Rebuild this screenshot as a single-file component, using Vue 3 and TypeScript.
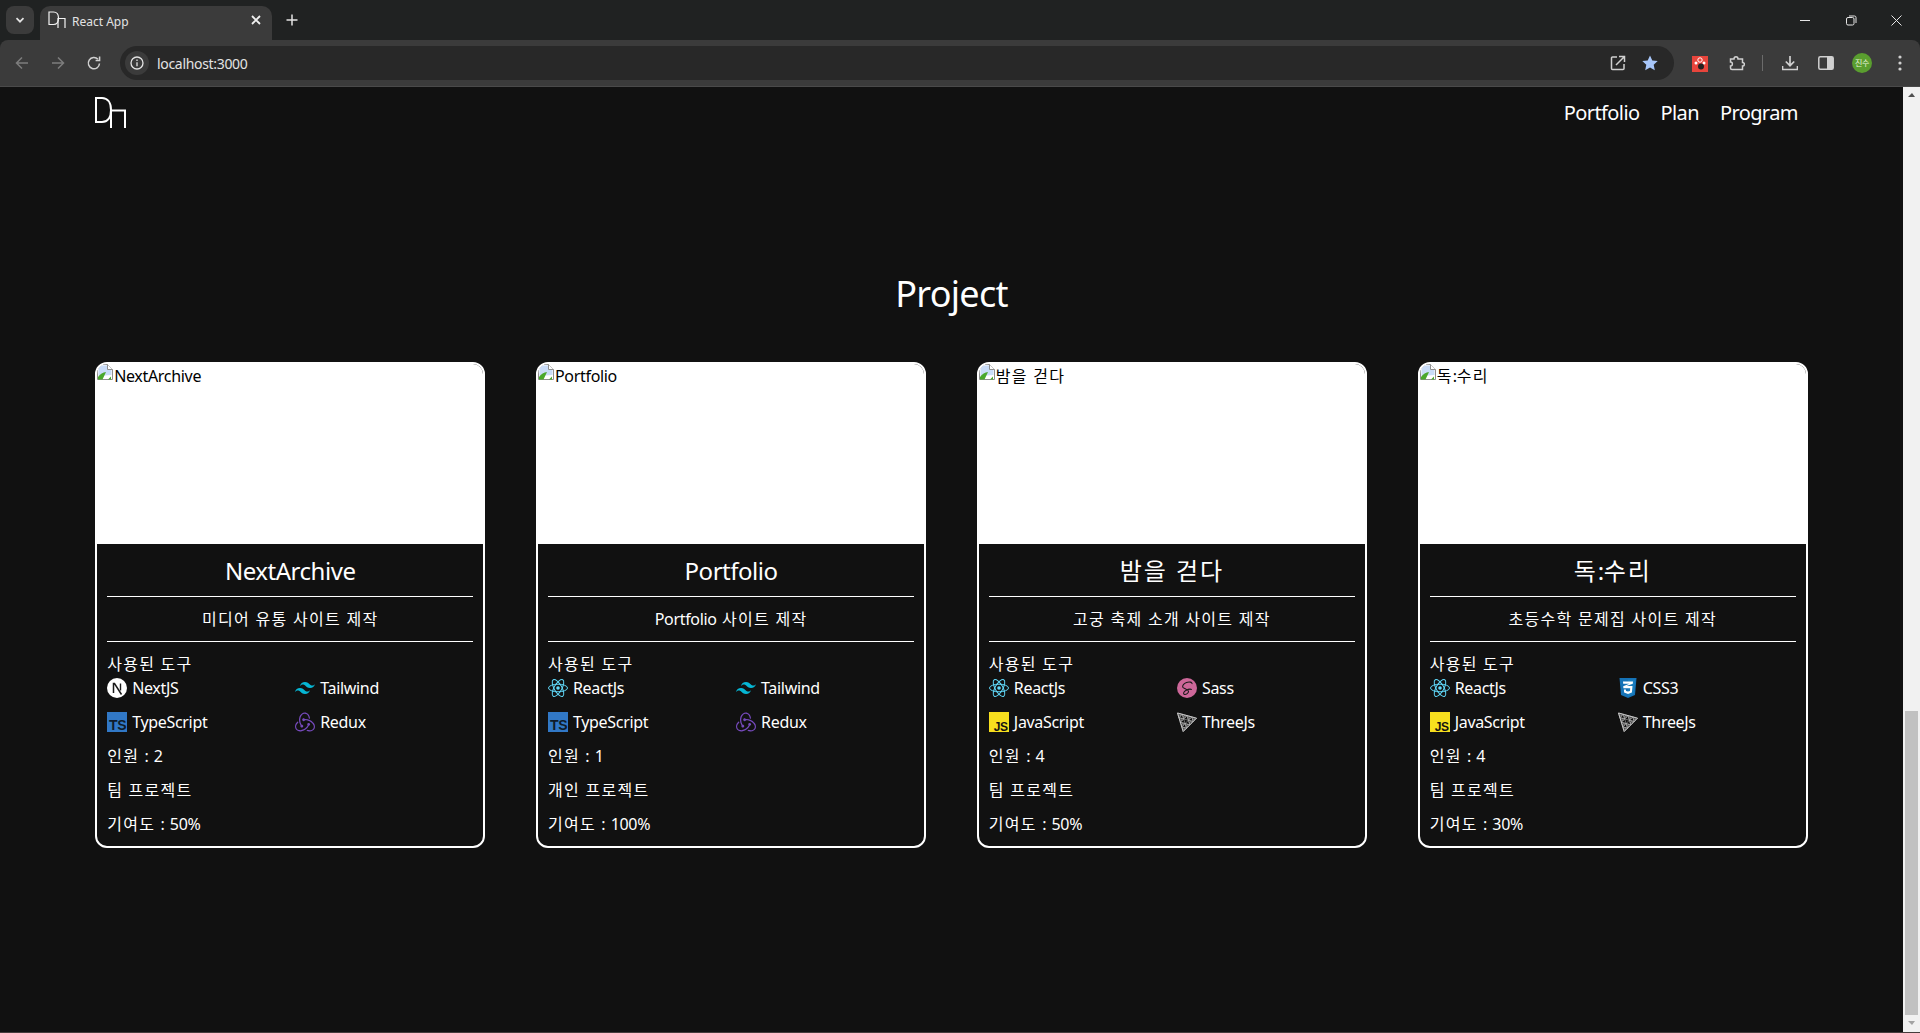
<script setup lang="ts">
import { h } from 'vue'

interface Tool {
  name: string
  icon: string
}

interface Project {
  title: string
  desc: string
  tools: Tool[]
  people: number
  kind: string
  share: number
}

const navLinks = ['Portfolio', 'Plan', 'Program']

const react: Tool = { name: 'ReactJs', icon: 'react' }
const tailwind: Tool = { name: 'Tailwind', icon: 'tailwind' }
const ts: Tool = { name: 'TypeScript', icon: 'ts' }
const redux: Tool = { name: 'Redux', icon: 'redux' }
const js: Tool = { name: 'JavaScript', icon: 'js' }
const three: Tool = { name: 'ThreeJs', icon: 'three' }

const projects: Project[] = [
  {
    title: 'NextArchive',
    desc: '미디어 유통 사이트 제작',
    tools: [{ name: 'NextJS', icon: 'next' }, tailwind, ts, redux],
    people: 2,
    kind: '팀 프로젝트',
    share: 50
  },
  {
    title: 'Portfolio',
    desc: 'Portfolio 사이트 제작',
    tools: [react, tailwind, ts, redux],
    people: 1,
    kind: '개인 프로젝트',
    share: 100
  },
  {
    title: '밤을 걷다',
    desc: '고궁 축제 소개 사이트 제작',
    tools: [react, { name: 'Sass', icon: 'sass' }, js, three],
    people: 4,
    kind: '팀 프로젝트',
    share: 50
  },
  {
    title: '독:수리',
    desc: '초등수학 문제집 사이트 제작',
    tools: [react, { name: 'CSS3', icon: 'css' }, js, three],
    people: 4,
    kind: '팀 프로젝트',
    share: 30
  }
]

// hangul runs get their own span, the CJK font is narrower than the original one
const Txt = (props: { text: string }) =>
  h(
    'span',
    props.text
      .split(/([\uAC00-\uD7A3]+(?: [\uAC00-\uD7A3]+)*)/)
      .map((part, i) => (i % 2 ? h('span', { class: 'ko' }, part) : part))
  )
Txt.props = ['text']

// triangle mesh of the three.js mark
type Pt = [number, number]
const mid = (a: Pt, b: Pt): Pt => [(a[0] + b[0]) / 2, (a[1] + b[1]) / 2]
const mesh = (a: Pt, b: Pt, c: Pt, depth: number): string => {
  const tri = `M${a[0]} ${a[1]}L${b[0]} ${b[1]}L${c[0]} ${c[1]}Z`
  if (depth === 0) return tri
  const ab = mid(a, b)
  const bc = mid(b, c)
  const ca = mid(c, a)
  return (
    mesh(a, ab, ca, depth - 1) +
    mesh(ab, b, bc, depth - 1) +
    mesh(ca, bc, c, depth - 1) +
    (depth > 1 ? mesh(ab, bc, ca, depth - 2) : '')
  )
}
const threePath = mesh([0.5, 1], [19.5, 6.2], [6.2, 19.5], 3)
</script>

<template>
  <div class="screen">
    <header class="browser">
      <div class="tabstrip">
        <button class="tab-search">
          <svg width="12" height="12" viewBox="0 0 12 12"><path d="M2.5 4.2 6 7.7l3.5-3.5" fill="none" stroke="#e3e3e3" stroke-width="1.7" /></svg>
        </button>
        <div class="tab">
          <svg class="favicon" width="18" height="18" viewBox="0 0 18 18" fill="none" stroke="#f3f3f3" stroke-width="1.2">
            <path d="M1 1h4.500c3.200 0 5 2.400 5 6s-1.800 6.500-5 6.500H1z" />
            <path d="M10 17V7.500h7V17" />
          </svg>
          <span class="tab-title">React App</span>
          <svg class="tab-close" width="10" height="10" viewBox="0 0 10 10"><path d="M1 1l8 8M9 1 1 9" stroke="#f0f0f0" stroke-width="1.800" /></svg>
        </div>
        <svg class="new-tab" width="12" height="12" viewBox="0 0 12 12"><path d="M6 .5v11M.5 6h11" stroke="#e3e3e3" stroke-width="1.500" /></svg>
        <div class="window-controls">
          <svg width="11" height="11" viewBox="0 0 11 11"><path d="M0 5.500h10" stroke="#e6e6e6" /></svg>
          <svg width="11" height="11" viewBox="0 0 11 11" fill="none" stroke="#e6e6e6"><rect x=".5" y="2.500" width="7.500" height="7.500" rx="1.500" /><path d="M3 1h5.500a1.500 1.500 0 0 1 1.500 1.500V8" /></svg>
          <svg width="11" height="11" viewBox="0 0 11 11"><path d="M.5.5l10 10M10.500.5l-10 10" stroke="#e6e6e6" /></svg>
        </div>
      </div>

      <div class="toolbar">
        <svg class="nav-btn" width="16" height="16" viewBox="0 0 16 16" fill="none" stroke="#7d7d7d" stroke-width="1.500"><path d="M14 8H2.500M8 2.500 2.500 8 8 13.500" /></svg>
        <svg class="nav-btn" width="16" height="16" viewBox="0 0 16 16" fill="none" stroke="#7d7d7d" stroke-width="1.500"><path d="M2 8h11.500M8 2.500 13.500 8 8 13.500" /></svg>
        <svg class="nav-btn" width="16" height="16" viewBox="0 0 16 16" fill="none" stroke="#d0d0d0" stroke-width="1.500"><path d="M13.500 8.500A5.600 5.600 0 1 1 12 4.300" /><path d="M13.600 1.500v4h-4" /></svg>

        <div class="omnibox">
          <span class="site-chip">
            <svg width="14" height="14" viewBox="0 0 14 14" fill="none" stroke="#e3e3e3" stroke-width="1.300"><circle cx="7" cy="7" r="6" /><path d="M7 6.200v4M7 3.600v1.400" /></svg>
          </span>
          <span class="url">localhost:3000</span>
          <svg class="omni-share" width="16" height="16" viewBox="0 0 16 16" fill="none" stroke="#d0d0d0" stroke-width="1.500"><path d="M7 2H2.500a1 1 0 0 0-1 1v10.500a1 1 0 0 0 1 1H13a1 1 0 0 0 1-1V9" /><path d="M6 10 14 2M9 1.500h5.500V7" /></svg>
          <svg class="omni-star" width="16" height="16" viewBox="0 0 16 16"><path d="M8 .5l2.300 5 5.400.6-4 3.700 1.100 5.400L8 12.500l-4.800 2.700 1.100-5.400-4-3.700 5.400-.6z" fill="#a8c7fa" /></svg>
        </div>

        <div class="ext-red">
          <svg width="16" height="16" viewBox="0 0 16 16"><rect width="16" height="16" fill="#e8453c" /><circle cx="8" cy="4" r="2.200" fill="none" stroke="#fff" /><circle cx="4" cy="7" r="1.500" fill="#fff" /><circle cx="12" cy="7" r="1.500" fill="#fff" /><circle cx="9" cy="10.500" r="3" fill="#222" /></svg>
        </div>
        <svg class="ext-puzzle" width="16" height="16" viewBox="0 0 16 16" fill="none" stroke="#d0d0d0" stroke-width="1.500"><path d="M1.500 4H5c0-3 4-3 4 0h4.500v3.500c2.500 0 2.500 3.500 0 3.500v3.500H3c-1 0-1.500-.5-1.500-1.500V11c2.500 0 2.500-4 0-4z" /></svg>
        <span class="tool-sep"></span>
        <svg class="tool-download" width="16" height="16" viewBox="0 0 16 16" fill="none" stroke="#d0d0d0" stroke-width="1.700"><path d="M8 1v9.500M3.800 6.500 8 10.700l4.200-4.200M.5 11v3.500h15V11" /></svg>
        <svg class="tool-panel" width="16" height="16" viewBox="0 0 16 16"><rect x=".8" y="1.800" width="14.400" height="12.400" rx="1.500" fill="none" stroke="#d0d0d0" stroke-width="1.500" /><rect x="9" y="2" width="6" height="12" fill="#d0d0d0" /></svg>
        <span class="avatar">진수</span>
        <svg class="tool-more" width="4" height="16" viewBox="0 0 4 16" fill="#d0d0d0"><circle cx="2" cy="2" r="1.600" /><circle cx="2" cy="8" r="1.600" /><circle cx="2" cy="14" r="1.600" /></svg>
      </div>
    </header>

    <div class="viewport">
      <main class="page">
        <nav class="topnav">
          <svg class="logo" width="32" height="31" viewBox="0 0 32 31" fill="none" stroke="#fff" stroke-width="2">
            <path d="M1 1h6c5.500 0 9 4.500 9 12s-3.500 12-9 12H1z" />
            <path d="M16 31V13.500h14V31" />
          </svg>
          <ul class="links">
            <li v-for="link in navLinks" :key="link">{{ link }}</li>
          </ul>
        </nav>

        <section class="projects">
          <h2 class="heading">Project</h2>
          <div class="cards">
            <article v-for="p in projects" :key="p.title" class="card">
              <div class="thumb">
                <svg class="broken" width="16" height="16" viewBox="0 0 16 16">
                  <path d="M.5.5h10l5 5v10H.5z" fill="#fff" stroke="#8f8f8f" />
                  <path d="M1.500 1.500h8.500l4.500 4.500v5L1.500 12z" fill="#c9dcf8" />
                  <path d="M1 15.500V13c2-3 5-4.500 8-5L5.500 15.500z" fill="#4aa82c" />
                  <path d="M11 15.500l3-3v3z" fill="#4aa82c" />
                  <path d="M10.500.5v5h5" fill="#fff" stroke="#8f8f8f" />
                </svg>
                <Txt class="alt" :text="p.title" />
              </div>
              <div class="body">
                <h3 class="title"><Txt :text="p.title" /></h3>
                <p class="desc"><Txt :text="p.desc" /></p>
                <p class="used"><Txt text="사용된 도구" /></p>
                <ul class="tools">
                  <li v-for="t in p.tools" :key="t.name" class="tool">
                    <svg v-if="t.icon === 'next'" width="20" height="20" viewBox="0 0 20 20">
                      <circle cx="10" cy="10" r="10" fill="#fff" />
                      <path d="M6.500 15V5.500h1l7 11" fill="none" stroke="#1a1a1a" stroke-width="1.500" />
                      <path d="M13.500 5.500v7" stroke="#1a1a1a" stroke-width="1.400" />
                    </svg>
                    <svg v-else-if="t.icon === 'tailwind'" width="20" height="20" viewBox="0 0 24 24">
                      <path fill="#06b6d4" d="M12.001,4.800c-3.200,0-5.200,1.600-6,4.800c1.200-1.600,2.600-2.200,4.200-1.800c0.913,0.228,1.565,0.890,2.288,1.624C13.666,10.618,15.027,12,18.001,12c3.200,0,5.200-1.600,6-4.800c-1.200,1.600-2.600,2.200-4.200,1.800c-0.913-0.228-1.565-0.890-2.288-1.624C16.337,6.182,14.976,4.800,12.001,4.800z M6.001,12c-3.200,0-5.200,1.600-6,4.800c1.200-1.600,2.600-2.200,4.200-1.800c0.913,0.228,1.565,0.890,2.288,1.624c1.177,1.194,2.538,2.576,5.512,2.576c3.200,0,5.200-1.600,6-4.800c-1.200,1.600-2.600,2.200-4.200,1.800c-0.913-0.228-1.565-0.890-2.288-1.624C10.337,13.382,8.976,12,6.001,12z" />
                    </svg>
                    <svg v-else-if="t.icon === 'ts'" class="badge" width="20" height="20" viewBox="0 0 20 20">
                      <rect width="20" height="20" fill="#3178c6" />
                      <text x="19" y="18.300" text-anchor="end" font-size="14" font-weight="700" fill="#0f1c2b" class="badge-text">TS</text>
                    </svg>
                    <svg v-else-if="t.icon === 'redux'" width="20" height="20" viewBox="0 0 24 24">
                      <path fill="#764abc" d="M16.634 16.504c.87-.075 1.543-.84 1.5-1.754-.047-.914-.796-1.648-1.709-1.648h-.061a1.710 1.710 0 00-1.648 1.769c.030.479.226.869.494 1.153-1.048 2.038-2.621 3.536-5.004 4.795-1.603.838-3.296 1.154-4.944.930-1.378-.195-2.456-.810-3.116-1.799-.988-1.499-1.078-3.116-.255-4.734.600-1.170 1.499-2.023 2.099-2.443a9.960 9.960 0 01-.420-1.543C-.868 14.408-.416 18.752.932 20.805c1.004 1.498 3.057 2.456 5.304 2.456.600 0 1.230-.044 1.843-.194 3.897-.749 6.848-3.086 8.541-6.532zm5.348-3.746c-2.320-2.728-5.738-4.226-9.634-4.226h-.510c-.253-.554-.837-.899-1.498-.899h-.045c-.943 0-1.678.810-1.647 1.753.030.898.794 1.648 1.708 1.648h.060a1.690 1.690 0 001.499-1.049h.540c2.310 0 4.500.674 6.488 1.992 1.527 1.005 2.622 2.323 3.237 3.897.538 1.288.509 2.547-.045 3.597-.855 1.647-2.294 2.517-4.196 2.517-1.199 0-2.367-.375-2.967-.644-.360.298-.960.793-1.394 1.093 1.318.598 2.652.943 3.940.943 2.922 0 5.093-1.647 5.918-3.236.898-1.798.824-4.824-1.469-7.416zM6.490 17.042c.030.899.793 1.648 1.708 1.648h.060a1.688 1.688 0 001.648-1.768c0-.900-.779-1.647-1.693-1.647h-.060c-.060 0-.150 0-.226.029-1.243-2.098-1.768-4.347-1.572-6.772.120-1.828.720-3.417 1.797-4.735.900-1.124 2.593-1.680 3.747-1.708 3.236-.061 4.585 3.971 4.689 5.574l1.498.450C17.741 3.197 14.686.620 11.764.620 9.020.620 6.490 2.613 5.470 5.535 4.077 9.430 4.991 13.177 6.700 16.174c-.150.195-.240.539-.210.868z" />
                    </svg>
                    <svg v-else-if="t.icon === 'react'" width="20" height="20" viewBox="0 0 20 20" fill="none" stroke="#61dafb" stroke-width="1">
                      <circle cx="10" cy="10" r="1.800" fill="#61dafb" stroke="none" />
                      <ellipse cx="10" cy="10" rx="9.500" ry="3.800" />
                      <ellipse cx="10" cy="10" rx="9.500" ry="3.800" transform="rotate(60 10 10)" />
                      <ellipse cx="10" cy="10" rx="9.500" ry="3.800" transform="rotate(120 10 10)" />
                    </svg>
                    <svg v-else-if="t.icon === 'sass'" width="20" height="20" viewBox="0 0 20 20">
                      <circle cx="10" cy="10" r="10" fill="#cd6799" />
                      <path d="M15 6c.5-2-3-2.500-5.500-1.500C7 5.500 5 7.500 5.800 9.200c.7 1.400 5.200 2 5.700 4 .4 1.800-2.500 3.700-4.200 3.200-1.400-.5-.6-3 1.500-4 2-1 4.700-1.600 6-.8" fill="none" stroke="#1a1a1a" stroke-width="1.100" />
                    </svg>
                    <svg v-else-if="t.icon === 'js'" class="badge" width="20" height="20" viewBox="0 0 20 20">
                      <rect width="20" height="20" fill="#f7df1e" />
                      <text x="18.500" y="19" text-anchor="end" font-size="12" font-weight="700" fill="#111" class="badge-text">JS</text>
                    </svg>
                    <svg v-else-if="t.icon === 'css'" width="20" height="20" viewBox="0 0 20 20">
                      <path d="M1.500 0h17L17 17l-7 3-7-3z" fill="#1572b6" />
                      <path d="M10 1.500h7l-1.200 14.500L10 18.200z" fill="#33a9dc" opacity=".2" />
                      <path d="M5 3.500h10l-.2 2.200-6.300 2.300h6l-.6 6.500L10 16l-3.900-1.500-.2-3h2l.1 1.400 2 .7 2-.7.200-2.600H5.400l-.2-2 6.200-2.500H5.200z" fill="#fff" />
                    </svg>
                    <svg v-else width="20" height="20" viewBox="0 0 20 20" fill="none" stroke="#b5b5b5" stroke-width=".55">
                      <path :d="threePath" />
                      <path d="M.5 1 19.500 6.200 6.200 19.500z" stroke="#d0d0d0" stroke-width=".9" />
                    </svg>
                    <span>{{ t.name }}</span>
                  </li>
                </ul>
                <p class="line"><Txt :text="`인원 : ${p.people}`" /></p>
                <p class="line"><Txt :text="p.kind" /></p>
                <p class="line"><Txt :text="`기여도 : ${p.share}%`" /></p>
              </div>
            </article>
          </div>
        </section>
      </main>

      <aside class="scrollbar">
        <span class="arrow-up"></span>
        <div class="track"><div class="thumb-bar"></div></div>
        <span class="arrow-down"></span>
      </aside>
    </div>
  </div>
</template>

<style scoped>
.screen {
  width: 1920px;
  height: 1033px;
  display: flex;
  flex-direction: column;
  overflow: hidden;
  font-family: "Noto Sans", "Noto Sans CJK KR", sans-serif;
  font-size: 16px;
  letter-spacing: -0.02em;
  color: #fff;
  background: #111;
}

/* browser chrome */
.browser {
  flex: none;
  background: #202222;
}

.tabstrip {
  height: 40px;
  display: flex;
  align-items: flex-start;
}

.tab-search {
  width: 28px;
  height: 28px;
  margin: 6px 0 0 6px;
  padding: 0;
  border: 0;
  border-radius: 8px;
  background: #3b3b3b;
  display: flex;
  align-items: center;
  justify-content: center;
}

.tab {
  width: 232px;
  height: 34px;
  margin: 6px 0 0 6px;
  padding: 0 0 6px 8px;
  box-sizing: border-box;
  border-radius: 10px 10px 0 0;
  background: #3b3b3b;
  display: flex;
  align-items: center;
}

.favicon {
  margin-right: 6px;
}

.tab-title {
  margin-top: 3px;
  font-size: 12px;
  letter-spacing: 0;
  color: #e3e3e3;
  flex: 1;
}

.tab-close {
  margin-right: 11px;
}

.new-tab {
  margin: 14px 0 0 14px;
}

.window-controls {
  margin-left: auto;
  width: 120px;
  height: 40px;
  box-sizing: border-box;
  display: flex;
  align-items: center;
  justify-content: space-between;
  padding: 0 18px 0 0;
}

.toolbar {
  height: 46px;
  border-bottom: 1px solid #4a4a4a;
  border-radius: 8px 8px 0 0;
  background: #3b3b3b;
  display: flex;
  align-items: center;
}

.nav-btn {
  margin-left: 20px;
  flex: none;
}

.nav-btn:first-child {
  margin-left: 14px;
}

.omnibox {
  width: 1554px;
  height: 34px;
  margin-left: 18px;
  border-radius: 17px;
  background: #282828;
  display: flex;
  align-items: center;
}

.site-chip {
  width: 24px;
  height: 24px;
  margin-left: 5px;
  border-radius: 50%;
  background: #3b3b3b;
  display: flex;
  align-items: center;
  justify-content: center;
}

.url {
  margin-left: 8px;
  font-size: 14px;
  color: #e3e3e3;
}

.omni-share {
  margin-left: auto;
}

.omni-star {
  margin: 0 16px;
}

.ext-red {
  margin-left: 18px;
  width: 16px;
  height: 16px;
}

.ext-puzzle {
  margin-left: 21px;
}

.tool-sep {
  width: 1px;
  height: 16px;
  margin-left: 17px;
  background: #6b6b6b;
}

.tool-download {
  margin-left: 19px;
}

.tool-panel {
  margin-left: 20px;
}

.avatar {
  width: 20px;
  height: 20px;
  margin-left: 18px;
  border-radius: 50%;
  background: #5a9e2f;
  font-size: 8px;
  line-height: 20px;
  text-align: center;
  color: #e8f4dc;
  flex: none;
}

.tool-more {
  margin-left: 26px;
}

/* page */
.viewport {
  flex: 1;
  min-height: 0;
  display: flex;
  border-bottom: 1px solid #453c3c;
}

.page {
  flex: 1;
  min-width: 0;
  background: #111;
  padding: 0 95.15px;
}

.topnav {
  height: 52px;
  display: flex;
  align-items: flex-start;
  justify-content: space-between;
}

.logo {
  margin-top: 10px;
  overflow: visible;
}

.links {
  list-style: none;
  margin: 0;
  padding: 12px 10px 0 0;
  display: flex;
  gap: 21px;
  font-size: 20px;
  line-height: 28px;
  letter-spacing: -0.03em;
}

.projects {
  padding-top: 131px;
}

.heading {
  margin: 0 0 44px;
  font-size: 36px;
  font-weight: 400;
  line-height: 48px;
  letter-spacing: -0.02em;
  text-align: center;
}

.cards {
  display: flex;
  justify-content: space-between;
}

.card {
  width: 390.2px;
  height: 486px;
  box-sizing: border-box;
  border: 2px solid #fff;
  border-radius: 12px;
  overflow: hidden;
}

.thumb {
  height: 180px;
  background: #fff;
  color: #000;
  display: flex;
  align-items: flex-start;
  line-height: 22px;
}

.alt {
  margin: 1px 0 0 1px;
}

.body {
  padding: 0 10px;
}

.title {
  margin: 0;
  height: 51px;
  padding-top: 1px;
  border-bottom: 1px solid #fff;
  font-size: 24px;
  font-weight: 400;
  line-height: 51px;
  letter-spacing: -0.02em;
  text-align: center;
}

.desc {
  margin: 0;
  height: 44px;
  border-bottom: 1px solid #fff;
  line-height: 44px;
  word-spacing: 1.5px;
  text-align: center;
}

.used {
  margin: 12px 0 3px;
  line-height: 21px;
}

.tools {
  list-style: none;
  margin: 0;
  padding: 0;
  display: grid;
  grid-template-columns: 1fr 1fr;
  column-gap: 10px;
  row-gap: 14px;
}

.tool {
  display: flex;
  align-items: center;
  gap: 5px;
  height: 20px;
  line-height: 20px;
}

.line {
  margin: 14px 0 0;
  line-height: 20px;
  word-spacing: 1.5px;
}

.badge {
  overflow: visible;
}

.badge-text {
  font-family: "Liberation Sans", sans-serif;
  letter-spacing: -0.5px;
}

/* scrollbar */
.scrollbar {
  flex: none;
  width: 17px;
  background: #f1f1f1;
  display: flex;
  flex-direction: column;
  align-items: center;
}

.arrow-up,
.arrow-down {
  flex: none;
  height: 17px;
  width: 17px;
  position: relative;
}

.arrow-up::after,
.arrow-down::after {
  content: "";
  position: absolute;
  left: 5px;
  top: 6px;
  border-left: 4px solid transparent;
  border-right: 3px solid transparent;
}

.arrow-up::after {
  border-bottom: 4px solid #505050;
}

.arrow-down::after {
  border-top: 4px solid #a3a3a3;
}

.track {
  flex: 1;
  width: 100%;
  display: flex;
  flex-direction: column;
  justify-content: flex-end;
  align-items: center;
}

.thumb-bar {
  width: 13px;
  height: 304px;
  background: #c1c1c1;
}
</style>

<style>
html,
body {
  margin: 0;
  overflow: hidden;
  background: #111;
}

/* rendered by the Txt helper, so it sits outside the scoped block */
.ko {
  letter-spacing: 0.08em;
  word-spacing: 0;
}
</style>
